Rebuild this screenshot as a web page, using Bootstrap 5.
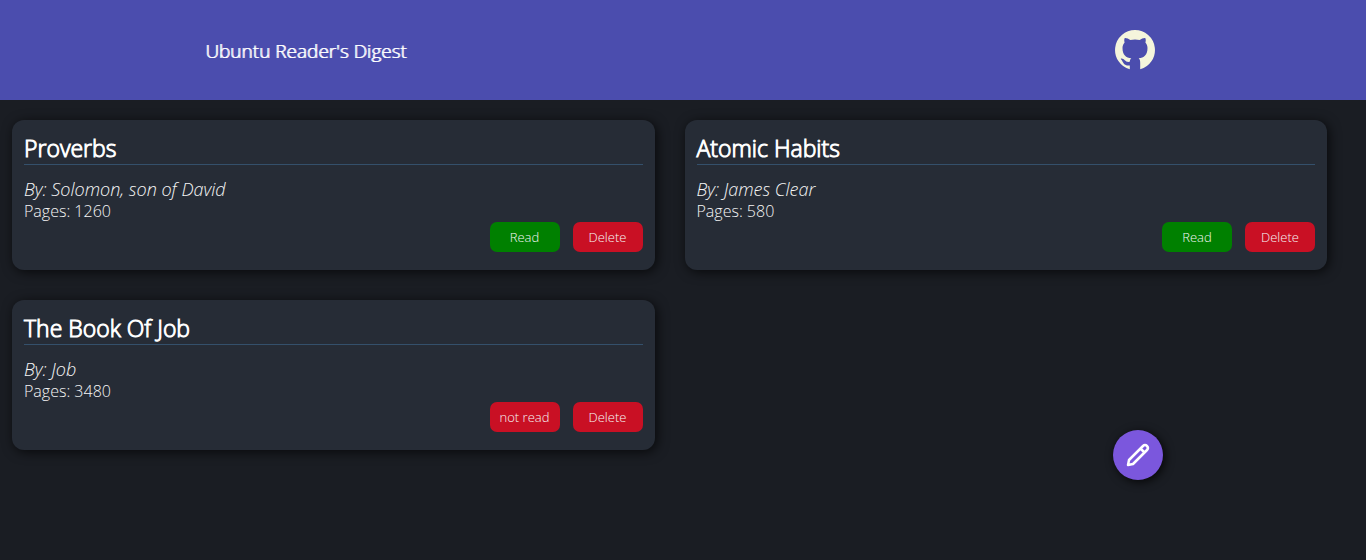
<!DOCTYPE html>
<html lang="en">
<head>
<meta charset="utf-8">
<meta name="viewport" content="width=device-width, initial-scale=1">
<title>Ubuntu Reader's Digest</title>
<link href="https://cdn.jsdelivr.net/npm/bootstrap@5.3.0/dist/css/bootstrap.min.css" rel="stylesheet">
<style>
  body { background: #1a1d23; color: #f5f5f5; font-family: "Open Sans", sans-serif; font-weight: 300; line-height: 22px; }
  .site-header { background: #4b4dae; height: 100px; padding: 0 15%; }
  .site-title { font-size: 19px; font-weight: 300; line-height: 24px; padding-top: 2px; color: #fff; text-shadow: 1px 0 #fff; }
  .repo-link { color: beige; margin-right: 6px; }
  .library { padding: 20px 39px 20px 12px; }
  .shelf { display: grid; grid-template-columns: repeat(2, minmax(0, 1fr)); gap: 30px; }
  .book { background: #262c36; color: #f5f5f5; border: 0; border-radius: 12px; padding: 12px; height: 150px; box-shadow: 2px 2px 12px rgba(0, 0, 0, .7); }
  .book-title { font-size: 23px; font-weight: 300; line-height: 32px; color: #fff; border-bottom: 1px solid #34506b; margin: 0 0 13px; -webkit-text-stroke: 1px #fff; }
  .author { font-size: 18px; }
  .book-btn { width: 70px; height: 30px; padding: 2px 0 0; font-size: 13px; font-weight: 300; color: #f5f5f5; border: 0; border-radius: 7px; }
  .is-read { background: green; }
  .is-red { background: #c91024; }
  .book-btn:hover { color: #fff; filter: brightness(1.1); }
  .actions { gap: 13px; }
  .add-book { right: 203px; bottom: 80px; width: 50px; height: 50px; background: #7b57dd; box-shadow: 2px 2px 10px rgba(0, 0, 0, .8); }
  @media (max-width: 700px) { .shelf { grid-template-columns: minmax(0, 1fr); } .add-book { right: 24px; bottom: 24px; } }
</style>
</head>
<body>
<header class="site-header d-flex align-items-center justify-content-between">
  <h1 class="site-title mb-0">Ubuntu Reader's Digest</h1>
  <a class="repo-link d-flex" href="#" aria-label="GitHub">
    <svg width="40" height="40" viewBox="0 0 40 40" fill="currentColor" aria-hidden="true"><path d="M20 0A20 20 0 0 0 14.8 39.300V35.500C9 36 8.500 33 7 30.500C6 29.300 5.500 28.800 6 28.500C9.500 28 10 32.800 14.800 31.800C15 30 15.500 29 16.300 28.300C11 27.800 7.500 25 7.500 18C7.500 15.800 8.300 14 9.600 12.500C9 10.600 9.200 8.900 9.800 8C11.500 7.800 13.500 8.800 15.300 10Q20 9 24.700 10C26.500 8.800 28.500 7.800 30.200 8C30.800 8.900 31 10.600 30.400 12.500C31.700 14 32.500 15.800 32.500 18C32.500 25 29 27.800 23.700 28.300C25 29.500 25.200 31 25.200 33.500V39.300A20 20 0 0 0 20 0Z"/></svg>
  </a>
</header>
<main class="library">
  <div class="shelf">
    <article class="card book">
      <h2 class="book-title">Proverbs</h2>
      <em class="author">By: Solomon, son of David</em>
      <span>Pages: 1260</span>
      <div class="actions d-flex justify-content-end">
        <button type="button" class="btn book-btn is-read">Read</button>
        <button type="button" class="btn book-btn is-red">Delete</button>
      </div>
    </article>
    <article class="card book">
      <h2 class="book-title">Atomic Habits</h2>
      <em class="author">By: James Clear</em>
      <span>Pages: 580</span>
      <div class="actions d-flex justify-content-end">
        <button type="button" class="btn book-btn is-read">Read</button>
        <button type="button" class="btn book-btn is-red">Delete</button>
      </div>
    </article>
    <article class="card book">
      <h2 class="book-title">The Book Of Job</h2>
      <em class="author">By: Job</em>
      <span>Pages: 3480</span>
      <div class="actions d-flex justify-content-end">
        <button type="button" class="btn book-btn is-red">not read</button>
        <button type="button" class="btn book-btn is-red">Delete</button>
      </div>
    </article>
  </div>
</main>
<button type="button" class="add-book btn p-0 border-0 rounded-circle position-fixed d-flex align-items-center justify-content-center" aria-label="Add a book">
  <svg width="26" height="26" viewBox="0 0 26 26" fill="none" stroke="#fff" stroke-width="2.500" stroke-linejoin="round" aria-hidden="true"><path d="M3 23 L4 18 L18 4 Q20 2 22 4 Q24 6 22 8 L8 22 Z M15.500 6.500 L19.500 10.500"/></svg>
</button>
<script src="https://cdn.jsdelivr.net/npm/bootstrap@5.3.0/dist/js/bootstrap.bundle.min.js"></script>
</body>
</html>
